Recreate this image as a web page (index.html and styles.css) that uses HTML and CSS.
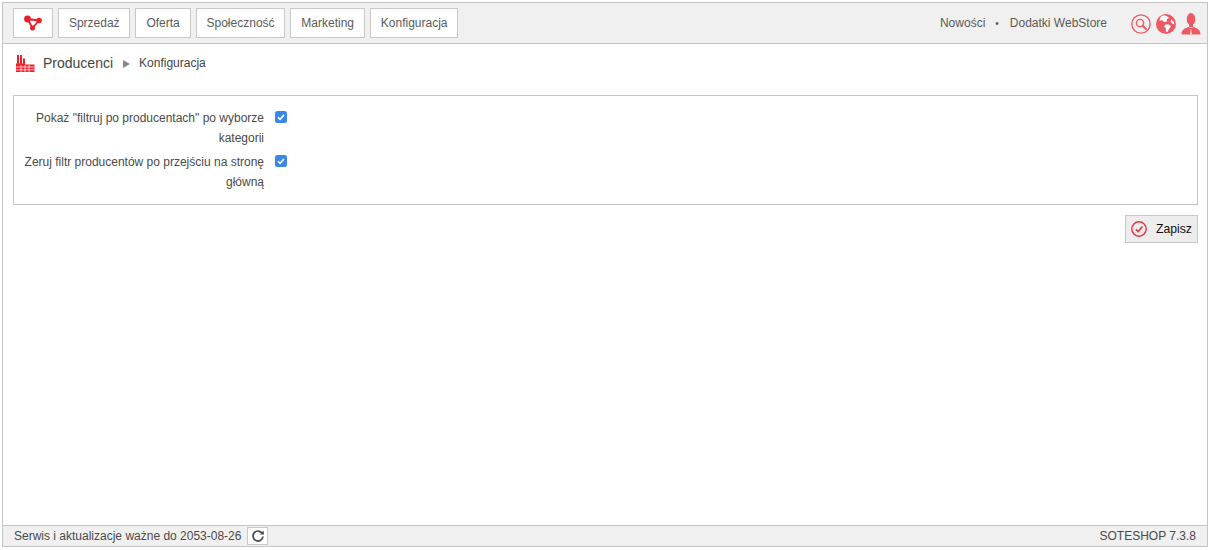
FILE: index.html
```html
<!DOCTYPE html>
<html lang="pl">
<head>
<meta charset="utf-8">
<title>Producenci</title>
<link rel="stylesheet" href="styles.css">
</head>
<body>
<div class="frame">
  <header class="topbar">
    <nav class="menu">
      <a class="menu-btn logo-btn" href="#">
        <svg width="20" height="16" viewBox="0 0 20 16"><g fill="#e9202c"><circle cx="4.5" cy="4" r="3.4"/><circle cx="16" cy="5.5" r="2.8"/><circle cx="9.5" cy="13" r="2.5"/></g><path d="M4.5 4L16 5.5L9.5 13Z" fill="none" stroke="#e9202c" stroke-width="1.8"/></svg>
      </a>
      <a class="menu-btn" href="#">Sprzedaż</a>
      <a class="menu-btn" href="#">Oferta</a>
      <a class="menu-btn" href="#">Społeczność</a>
      <a class="menu-btn" href="#">Marketing</a>
      <a class="menu-btn" href="#">Konfiguracja</a>
    </nav>
    <div class="top-right">
      <a class="top-link" href="#">Nowości</a>
      <span class="dot">•</span>
      <a class="top-link" href="#">Dodatki WebStore</a>
      <div class="top-icons">
        <svg width="20" height="20" viewBox="0 0 20 20" fill="none" stroke="#ee5a63"><circle cx="10" cy="10" r="9.2" stroke-width="1.3"/><circle cx="9" cy="9" r="3.6" stroke-width="1.4"/><path d="M11.7 11.7L15 15" stroke-width="2" stroke-linecap="round"/></svg>
        <svg width="20" height="20" viewBox="0 0 20 20"><circle cx="10" cy="10" r="10" fill="#ee5a63"/><path d="M6 1.8C9 1 12 2 13 4L10.5 5.5L11 7.5L8 8L6 6L3.5 7C3.5 5 4.5 3 6 1.8ZM9.5 10.5L13 10.5L15 12.5L13 15L11.5 18L9.8 17.5L9.8 14L8 12.5ZM15.5 5.5L18 8L18.5 10.5L16 9.5L14.5 7.5Z" fill="#fff"/></svg>
        <svg width="20" height="22" viewBox="0 0 20 22"><ellipse cx="10" cy="6.2" rx="4.2" ry="6.2" fill="#ee5a63"/><path d="M8 11H12V14H8Z" fill="#ee5a63"/><path d="M0.5 21.5C0.5 17 3 15.5 7.5 14L10 15L12.5 14C17 15.5 19.5 17 19.5 21.5Z" fill="#ee5a63"/><path d="M10 15.5L11 21.5H9Z" fill="#fff"/></svg>
      </div>
    </div>
  </header>

  <main class="content">
    <div class="crumbs">
      <svg class="crumb-icon" width="20" height="19" viewBox="0 0 20 19"><path d="M1 18V9.5H2V1H4V9.5H5V1H7V9.5H8V4.5H10V10.5H19.5V18Z" fill="#f0202c"/><path d="M1 13H19.5M1 15.8H19.5M6 11V18M10 11V18M14 11V18" stroke="#fff" stroke-width=".7" fill="none"/></svg>
      <span class="crumb-title">Producenci</span>
      <span class="crumb-arrow"></span>
      <span class="crumb-sub">Konfiguracja</span>
    </div>

    <form class="panel">
      <div class="row">
        <label class="row-label">Pokaż "filtruj po producentach" po wyborze kategorii</label>
        <span class="check"><svg width="12" height="12" viewBox="0 0 12 12"><path d="M3 6.2L5.1 8.3L9 3.9" fill="none" stroke="#fff" stroke-width="1.6"/></svg></span>
      </div>
      <div class="row">
        <label class="row-label">Zeruj filtr producentów po przejściu na stronę główną</label>
        <span class="check"><svg width="12" height="12" viewBox="0 0 12 12"><path d="M3 6.2L5.1 8.3L9 3.9" fill="none" stroke="#fff" stroke-width="1.6"/></svg></span>
      </div>
    </form>

    <div class="actions">
      <button class="save" type="button">
        <svg width="16" height="16" viewBox="0 0 16 16" fill="none" stroke="#e8323c"><circle cx="8" cy="8" r="7.2" stroke-width="1.4"/><path d="M4.8 8.2L7.2 10.6L11.4 5.4" stroke-width="1.6"/></svg>
        <span>Zapisz</span>
      </button>
    </div>
  </main>

  <footer class="footer">
    <div class="foot-left">
      <span>Serwis i aktualizacje ważne do 2053-08-26</span>
      <a class="refresh" href="#"><svg width="14" height="14" viewBox="0 0 14 14" fill="none"><path d="M11.4 4.6A5 5 0 1 0 12 7.5" stroke="#4a4a4a" stroke-width="1.7"/><path d="M9 5.4L13 5.6L12.6 1.6Z" fill="#4a4a4a"/></svg></a>
    </div>
    <span>SOTESHOP 7.3.8</span>
  </footer>
</div>
</body>
</html>
```
FILE: styles.css
```css
* { box-sizing: border-box; }
html, body { height: 100%; }
body {
  margin: 0;
  padding: 2px 2px 3px 2px;
  background: #fff;
  font-family: "Liberation Sans", Arial, sans-serif;
  font-size: 12px;
  color: #555;
}
a { color: inherit; text-decoration: none; }
.frame {
  height: 100%;
  border: 1px solid #c4c4c4;
  display: flex;
  flex-direction: column;
}
.topbar {
  height: 41px;
  flex: none;
  background: #f0f0f0;
  border-bottom: 1px solid #c4c4c4;
  display: flex;
  align-items: flex-start;
  justify-content: space-between;
  padding: 5px 6px 0 10px;
}
.menu { display: flex; gap: 5px; }
.menu-btn {
  height: 30px;
  display: flex;
  align-items: center;
  padding: 0 9.9px;
  background: #fff;
  border: 1px solid #c8c8c8;
  color: #5a5a5a;
}
.logo-btn { width: 40px; justify-content: center; padding: 0; }
.top-right { display: flex; align-items: center; height: 30px; color: #5a5a5a; }
.dot { margin: 0 11px 0 10px; font-size: 10px; }
.top-icons { display: flex; align-items: center; gap: 5px; margin-left: 24px; margin-top: 1px; }
.content { flex: 1; padding: 0 9px 0 10px; }
.crumbs { display: flex; align-items: center; height: 36px; padding-top: 1px; }
.crumb-icon { margin: 2px 8px 0 2px; }
.crumb-title { font-size: 14px; color: #444; }
.crumb-arrow {
  width: 0; height: 0;
  margin: 2px 9px 0 10px;
  border-left: 7px solid #888;
  border-top: 4px solid transparent;
  border-bottom: 4px solid transparent;
}
.crumb-sub { color: #444; }
.panel {
  margin-top: 15px;
  height: 110px;
  border: 1px solid #c4c4c4;
  padding: 12px 0 0 0;
}
.row { display: flex; align-items: flex-start; margin-bottom: 4px; }
.row-label {
  width: 250px;
  text-align: right;
  line-height: 20px;
  color: #4a4a4a;
}
.check {
  width: 12px; height: 12px;
  margin: 3px 0 0 11px;
  border-radius: 2.5px;
  background: #3b87e8;
  display: block;
}
.check svg { display: block; }
.actions { display: flex; justify-content: flex-end; margin-top: 10px; }
.save {
  width: 73px; height: 28px;
  display: flex;
  align-items: center;
  gap: 9px;
  padding: 0 0 0 5px;
  background: #ededed;
  border: 1px solid #c8c8c8;
  color: #111;
  font-family: inherit;
  font-size: 12.2px;
}
.footer {
  height: 21px;
  flex: none;
  background: #f0f0f0;
  border-top: 1px solid #c4c4c4;
  display: flex;
  align-items: center;
  justify-content: space-between;
  padding: 0 11px 0 11px;
  color: #4a4a4a;
}
.foot-left { display: flex; align-items: center; gap: 6px; }
.refresh {
  width: 21px; height: 18px;
  background: #fff;
  border: 1px solid #c8c8c8;
  display: flex;
  align-items: center;
  justify-content: center;
}
```
